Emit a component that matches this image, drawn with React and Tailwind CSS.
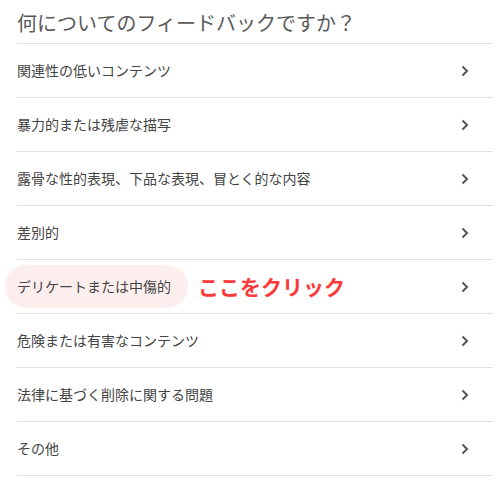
const items = [
  "関連性の低いコンテンツ",
  "暴力的または残虐な描写",
  "露骨な性的表現、下品な表現、冒とく的な内容",
  "差別的",
  "デリケートまたは中傷的",
  "危険または有害なコンテンツ",
  "法律に基づく削除に関する問題",
  "その他",
];

function Chevron() {
  return (
    <svg width="10" height="12" viewBox="0 0 10 12" className="shrink-0">
      <path d="M2.5 1.5 L7 6 L2.5 10.5" fill="none" stroke="#555" strokeWidth="2" />
    </svg>
  );
}

export default function App() {
  return (
    <div
      className="w-[501px] h-[484px] bg-white pl-[17px] pr-[8px]"
      style={{ fontFamily: '"Noto Sans CJK JP", "Noto Sans", sans-serif' }}
    >
      <div className="h-[44px] flex items-center border-b border-[#e0e0e0] pt-[2px]">
        <h1 className="text-[20px] leading-none text-[#5a5a5a]">何についてのフィードバックですか？</h1>
      </div>
      {items.map((label, i) => (
        <div
          key={label}
          className="h-[54px] flex items-center justify-between border-b border-[#e0e0e0] pr-[23px]"
        >
          {i === 4 ? (
            <div className="flex items-center">
              <span className="-ml-3 pl-3 pr-[17px] h-[43px] flex items-center rounded-full bg-[#fdeeee] text-[14px] text-[#444]">
                {label}
              </span>
              <span className="ml-[10px] text-[21px] font-bold text-[#fb3a3a] leading-none">ここをクリック</span>
            </div>
          ) : (
            <span className="text-[14px] text-[#444]">{label}</span>
          )}
          <Chevron />
        </div>
      ))}
    </div>
  );
}
